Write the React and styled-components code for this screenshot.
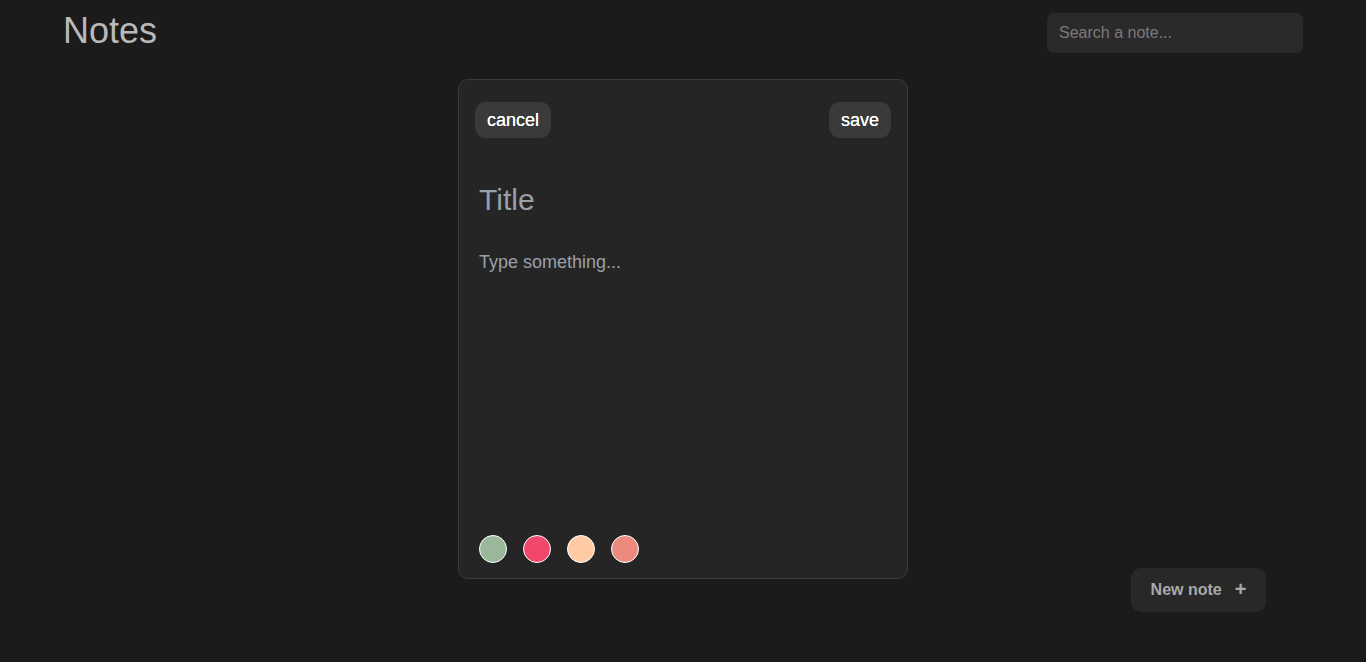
import React from 'react'
import styled, { createGlobalStyle } from 'styled-components'

const GlobalStyle = createGlobalStyle`
  html, body {
    margin: 0;
    padding: 0;
    background: #1b1b1b;
    font-family: "Liberation Sans", Arial, sans-serif;
  }
  * { box-sizing: border-box; }
`

const Page = styled.main`
  min-height: 662px;
  background: #1b1b1b;
`

const Header = styled.header`
  display: flex;
  justify-content: space-between;
  align-items: center;
  padding: 13px 63px 0;
`

const Brand = styled.h1`
  margin: -5px 0 0;
  font-size: 36px;
  font-weight: 400;
  color: #b9b9b9;
`

const Search = styled.input`
  width: 256px;
  height: 40px;
  border: none;
  outline: none;
  border-radius: 7px;
  background: #2a2a2a;
  padding: 0 12px;
  font: 16px "Liberation Sans", Arial, sans-serif;
  color: #ddd;
  &::placeholder { color: #7a7a7a; }
`

const Stage = styled.section`
  display: flex;
  justify-content: center;
  padding-top: 26px;
`

const Card = styled.div`
  width: 450px;
  height: 500px;
  display: flex;
  flex-direction: column;
  background: #252525;
  border: 1px solid #3b3b3b;
  border-radius: 10px;
  padding: 22px 16px 15px;
`

const Toolbar = styled.div`
  display: flex;
  justify-content: space-between;
`

const Pill = styled.button`
  height: 36px;
  padding: 0 12px;
  border: none;
  border-radius: 11px;
  background: #3a3a3a;
  color: #fff;
  font: 18px "Liberation Sans", Arial, sans-serif;
  text-shadow: 0 0 0.4px #fff;
  cursor: pointer;
`

const TitleInput = styled.input`
  margin-top: 42px;
  padding: 0 4px;
  height: 40px;
  border: none;
  outline: none;
  background: transparent;
  color: #ddd;
  font: 30px "Liberation Sans", Arial, sans-serif;
  &::placeholder { color: #9aa0aa; }
`

const Body = styled.textarea`
  flex: 1;
  margin-top: 30px;
  padding: 0 4px;
  border: none;
  outline: none;
  resize: none;
  background: transparent;
  color: #ddd;
  font: 18px/24px "Liberation Sans", Arial, sans-serif;
  &::placeholder { color: #9aa0aa; }
`

const Swatches = styled.div`
  display: flex;
  gap: 16px;
  padding-left: 4px;
`

const Swatch = styled.button`
  width: 28px;
  height: 28px;
  border-radius: 50%;
  border: 1px solid #fff;
  padding: 0;
  background: ${p => p.color};
  cursor: pointer;
`

const NewNote = styled.button`
  position: fixed;
  right: 100px;
  bottom: 50px;
  width: 135px;
  height: 44px;
  display: flex;
  align-items: center;
  justify-content: center;
  gap: 13px;
  border: none;
  border-radius: 10px;
  background: #282828;
  color: #a9a9a9;
  font: bold 16px "Liberation Sans", Arial, sans-serif;
  cursor: pointer;
`

const Plus = styled.span`
  font-size: 20px;
  line-height: 1;
  margin-top: -2px;
`

const colors = ['#9ab799', '#f0476a', '#ffcba4', '#ec8a7f']

export default function App() {
  return (
    <Page>
      <GlobalStyle />
      <Header>
        <Brand>Notes</Brand>
        <Search placeholder="Search a note..." />
      </Header>
      <Stage>
        <Card>
          <Toolbar>
            <Pill>cancel</Pill>
            <Pill>save</Pill>
          </Toolbar>
          <TitleInput placeholder="Title" />
          <Body placeholder="Type something..." />
          <Swatches>
            {colors.map(c => <Swatch key={c} color={c} />)}
          </Swatches>
        </Card>
      </Stage>
      <NewNote>New note <Plus>+</Plus></NewNote>
    </Page>
  )
}
